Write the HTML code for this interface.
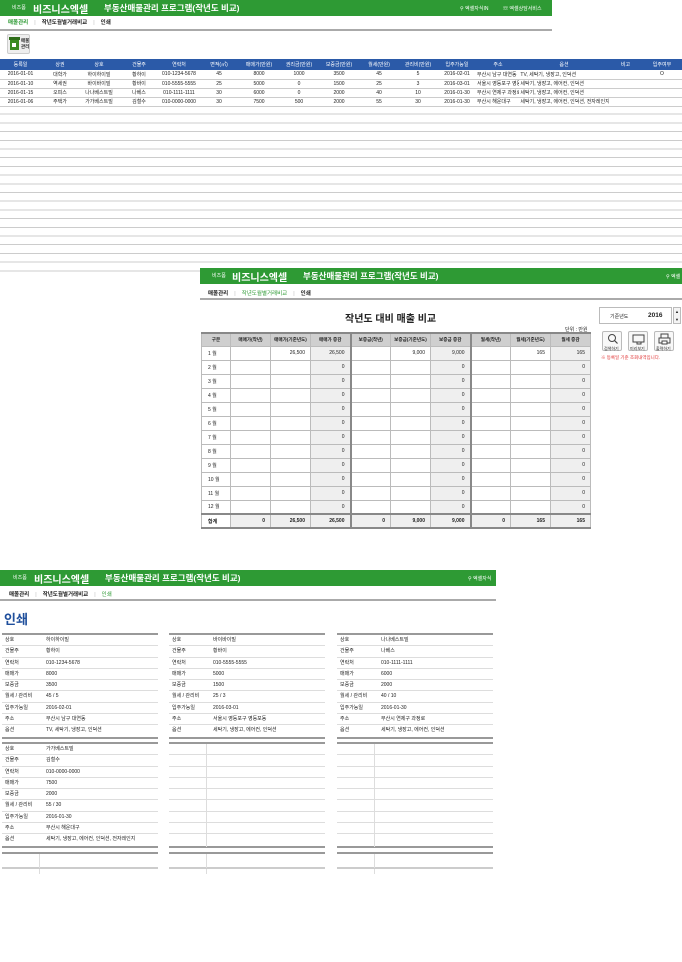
<!DOCTYPE html>
<html><head><meta charset="utf-8">
<style>
*{margin:0;padding:0;box-sizing:border-box}
body{width:682px;height:962px;background:#fff;position:relative;overflow:hidden;font-family:"Liberation Sans","Noto Sans CJK KR",sans-serif;color:#222}
.abs{position:absolute}
.gh{background:#2e9a34;color:#fff;height:16px;white-space:nowrap}
.gh .s{position:absolute;top:4px;font-size:5px}
.gh .b{position:absolute;top:1px;font-size:10px;font-weight:bold}
.gh .t{position:absolute;top:2px;font-size:8.5px;font-weight:bold}
.gh .r{position:absolute;top:5px;font-size:5px}
.nav{font-size:5.5px;font-weight:bold;white-space:nowrap}
.nav span{margin-right:6px}
.nav .sep{color:#bbb;font-weight:normal}
.gl{height:2px;background:#aaa}
table{border-collapse:collapse;table-layout:fixed}
.t1 td{font-size:5px;height:9px;text-align:center;border-bottom:1px solid #ccc;white-space:nowrap;padding:0;overflow:hidden}
.t1 tr.h td{background:#2b5aa8;color:#fff;height:11px;border:none}
.t1 td.l{text-align:left}
.t2 td{font-size:5px;border:1px solid #bbb;height:14px;text-align:right;padding-right:5px;white-space:nowrap;overflow:hidden}
.t2 td:first-child{text-align:left;padding-left:6px;padding-right:0}
.t2 tr.h td{background:#cfcfcf;text-align:center;padding:0;font-weight:bold;height:13px;border-top:2px solid #888;font-size:4.6px}
.t2 td.g{background:#efefef}
.t2 td.k{border-right:2px solid #888}
.t2 tr.f td{font-weight:bold;border-top:2px solid #888;border-bottom:2px solid #888}
.card{position:absolute;width:156px;border-top:2px solid #999;border-bottom:2px solid #999}
.card div{height:11.3px;border-bottom:1px solid #ddd;font-size:5px;position:relative;line-height:10px;white-space:nowrap}
.card div:last-child{border-bottom:none}
.card div b{font-weight:normal;position:absolute;left:3px}
.card div i{font-style:normal;position:absolute;left:44px}
.card.e div:before{content:"";position:absolute;left:37px;top:0;bottom:-1px;border-left:1px solid #ddd}
</style></head><body>

<!-- Panel 1 -->
<div class="abs gh" style="left:0;top:0;width:552px">
<span class="s" style="left:12px">비즈폼</span><span class="b" style="left:33px">비즈니스엑셀</span>
<span class="t" style="left:104px">부동산매물관리 프로그램(작년도 비교)</span>
<span class="r" style="left:460px">⚲ 엑셀자식IN</span><span class="r" style="left:503px">☏ 엑셀상담서비스</span></div>
<div class="abs nav" style="left:8px;top:18px"><span style="color:#2e9a34">매물관리</span><span class="sep">|</span><span>작년도월별거래비교</span><span class="sep">|</span><span>인쇄</span></div>
<div class="abs gl" style="left:0;top:29px;width:552px"></div>
<div class="abs" style="left:7px;top:34px;width:23px;height:20px;background:#eee;border:1px solid #ccc;border-radius:2px">
<div class="abs" style="left:2px;top:4px;width:9px;height:11px;background:#3a8a22"></div>
<div class="abs" style="left:1px;top:2px;width:11px;height:3px;background:#2d6d18"></div>
<div class="abs" style="left:4px;top:8px;width:4px;height:4px;background:#fff"></div>
<div class="abs" style="left:13px;top:3px;font-size:4.5px;font-weight:bold;line-height:6px;white-space:nowrap">매물<br>관리</div></div>
<table class="abs t1" style="left:0;top:59px;width:682px">
<colgroup><col style="width:41px"><col style="width:38px"><col style="width:40px"><col style="width:40px"><col style="width:40px"><col style="width:40px"><col style="width:40px"><col style="width:40px"><col style="width:40px"><col style="width:40px"><col style="width:38px"><col style="width:40px"><col style="width:42px"><col style="width:90px"><col style="width:33px"><col></colgroup>
<tr class="h"><td>등록일</td><td>상권</td><td>상호</td><td>건물주</td><td>연락처</td><td>면적(㎡)</td><td>매매가(만원)</td><td>권리금(만원)</td><td>보증금(만원)</td><td>월세(만원)</td><td>관리비(만원)</td><td>입주가능일</td><td>주소</td><td>옵션</td><td>비고</td><td>입주여부</td></tr>
<tr><td>2016-01-01</td><td>대학가</td><td>하이하이빌</td><td>황하이</td><td>010-1234-5678</td><td>45</td><td>8000</td><td>1000</td><td>3500</td><td>45</td><td>5</td><td>2016-02-01</td><td class="l">부산시 남구 대연동</td><td class="l">&nbsp;TV, 세탁기, 냉장고, 인덕션</td><td></td><td>O</td></tr>
<tr><td>2016-01-10</td><td>역세권</td><td>바이바이빌</td><td>황바이</td><td>010-5555-5555</td><td>25</td><td>5000</td><td>0</td><td>1500</td><td>25</td><td>3</td><td>2016-03-01</td><td class="l">서울시 영등포구 영등포동</td><td class="l">&nbsp;세탁기, 냉장고, 에어컨, 인덕션</td><td></td><td></td></tr>
<tr><td>2016-01-15</td><td>오피스</td><td>나나베스트빌</td><td>나베스</td><td>010-1111-1111</td><td>30</td><td>6000</td><td>0</td><td>2000</td><td>40</td><td>10</td><td>2016-01-30</td><td class="l">부산시 연제구 과정로</td><td class="l">&nbsp;세탁기, 냉장고, 에어컨, 인덕션</td><td></td><td></td></tr>
<tr><td>2016-01-06</td><td>주택가</td><td>가가베스트빌</td><td>김철수</td><td>010-0000-0000</td><td>30</td><td>7500</td><td>500</td><td>2000</td><td>55</td><td>30</td><td>2016-01-30</td><td class="l">부산시 해운대구</td><td class="l">&nbsp;세탁기, 냉장고, 에어컨, 인덕션, 전자레인지</td><td></td><td></td></tr>
</table>
<div class="abs" style="left:0;top:106px;width:682px;height:168px;background:repeating-linear-gradient(to bottom,transparent 0,transparent 7.7px,#ccc 7.7px,#ccc 8.7px)"></div>

<!-- Panel 2 -->
<div class="abs" style="left:200px;top:267px;width:482px;height:270px;background:#fff"></div>
<div class="abs gh" style="left:200px;top:268px;width:482px">
<span class="s" style="left:12px">비즈폼</span><span class="b" style="left:32px">비즈니스엑셀</span>
<span class="t" style="left:103px">부동산매물관리 프로그램(작년도 비교)</span>
<span class="r" style="left:466px">⚲ 엑셀</span></div>
<div class="abs nav" style="left:208px;top:289px"><span>매물관리</span><span class="sep">|</span><span style="color:#2e9a34;font-weight:normal">작년도월별거래비교</span><span class="sep">|</span><span>인쇄</span></div>
<div class="abs gl" style="left:200px;top:298px;width:482px"></div>
<div class="abs" style="left:345px;top:310px;font-size:10px;font-weight:bold">작년도 대비 매출 비교</div>
<div class="abs" style="left:565px;top:326px;font-size:5px">단위 : 만원</div>
<table class="abs t2" style="left:201px;top:332px;width:389px">
<colgroup><col style="width:29px"><col style="width:40px"><col style="width:40px"><col style="width:40px"><col style="width:40px"><col style="width:40px"><col style="width:40px"><col style="width:40px"><col style="width:40px"><col style="width:40px"></colgroup>
<tr class="h"><td>구분</td><td>매매가(작년)</td><td>매매가(기준년도)</td><td class="k">매매가 증감</td><td>보증금(작년)</td><td>보증금(기준년도)</td><td class="k">보증금 증감</td><td>월세(작년)</td><td>월세(기준년도)</td><td>월세 증감</td></tr>
<tr><td>1 월</td><td></td><td>26,500</td><td class="g k">26,500</td><td></td><td>9,000</td><td class="g k">9,000</td><td></td><td>165</td><td class="g">165</td></tr>
<tr><td>2 월</td><td></td><td></td><td class="g k">0</td><td></td><td></td><td class="g k">0</td><td></td><td></td><td class="g">0</td></tr>
<tr><td>3 월</td><td></td><td></td><td class="g k">0</td><td></td><td></td><td class="g k">0</td><td></td><td></td><td class="g">0</td></tr>
<tr><td>4 월</td><td></td><td></td><td class="g k">0</td><td></td><td></td><td class="g k">0</td><td></td><td></td><td class="g">0</td></tr>
<tr><td>5 월</td><td></td><td></td><td class="g k">0</td><td></td><td></td><td class="g k">0</td><td></td><td></td><td class="g">0</td></tr>
<tr><td>6 월</td><td></td><td></td><td class="g k">0</td><td></td><td></td><td class="g k">0</td><td></td><td></td><td class="g">0</td></tr>
<tr><td>7 월</td><td></td><td></td><td class="g k">0</td><td></td><td></td><td class="g k">0</td><td></td><td></td><td class="g">0</td></tr>
<tr><td>8 월</td><td></td><td></td><td class="g k">0</td><td></td><td></td><td class="g k">0</td><td></td><td></td><td class="g">0</td></tr>
<tr><td>9 월</td><td></td><td></td><td class="g k">0</td><td></td><td></td><td class="g k">0</td><td></td><td></td><td class="g">0</td></tr>
<tr><td>10 월</td><td></td><td></td><td class="g k">0</td><td></td><td></td><td class="g k">0</td><td></td><td></td><td class="g">0</td></tr>
<tr><td>11 월</td><td></td><td></td><td class="g k">0</td><td></td><td></td><td class="g k">0</td><td></td><td></td><td class="g">0</td></tr>
<tr><td>12 월</td><td></td><td></td><td class="g k">0</td><td></td><td></td><td class="g k">0</td><td></td><td></td><td class="g">0</td></tr>
<tr class="f"><td>합계</td><td class="g">0</td><td class="g">26,500</td><td class="g k">26,500</td><td class="g">0</td><td class="g">9,000</td><td class="g k">9,000</td><td class="g">0</td><td class="g">165</td><td class="g">165</td></tr>
</table>
<div class="abs" style="left:599px;top:307px;width:73px;height:17px;border:1px solid #bbb;font-size:5px;font-weight:bold">
<span class="abs" style="left:10px;top:5px;font-weight:normal">기준년도</span><span class="abs" style="left:48px;top:4px;font-size:6.5px">2016</span></div>
<div class="abs" style="left:673px;top:307px;width:8px;height:17px;border:1px solid #bbb;background:#f4f4f4;font-size:4px;text-align:center;line-height:8px">▲<br>▼</div>
<div class="abs" style="left:602px;top:331px;width:20px;height:20px;border:1px solid #bbb;border-radius:2px;background:#f8f8f8">
<svg width="20" height="14" class="abs" style="left:0;top:0"><circle cx="9" cy="6" r="3.5" fill="none" stroke="#444" stroke-width="1"/><path d="M11.5 8.5l3 3" stroke="#444" stroke-width="1.2"/></svg>
<span class="abs" style="left:1px;top:14px;font-size:4px;white-space:nowrap">검색하기</span></div>
<div class="abs" style="left:628px;top:331px;width:20px;height:20px;border:1px solid #bbb;border-radius:2px;background:#f8f8f8">
<svg width="20" height="14" class="abs" style="left:0;top:0"><rect x="4" y="3" width="11" height="7" fill="none" stroke="#444"/><path d="M8 10v2h4v-2" fill="none" stroke="#444"/></svg>
<span class="abs" style="left:1px;top:14px;font-size:4px;white-space:nowrap">미리보기</span></div>
<div class="abs" style="left:654px;top:331px;width:20px;height:20px;border:1px solid #bbb;border-radius:2px;background:#f8f8f8">
<svg width="20" height="14" class="abs" style="left:0;top:0"><rect x="6" y="2" width="7" height="4" fill="none" stroke="#444"/><rect x="4" y="6" width="11" height="5" fill="none" stroke="#444"/><rect x="7" y="9" width="5" height="3" fill="#fff" stroke="#444"/></svg>
<span class="abs" style="left:1px;top:14px;font-size:4px;white-space:nowrap">출력하기</span></div>
<div class="abs" style="left:601px;top:355px;font-size:4.5px;color:#e03030;white-space:nowrap">※ 등록일 기준 조회내역입니다.</div>

<!-- Panel 3 -->
<div class="abs" style="left:0;top:569px;width:496px;height:306px;background:#fff"></div>
<div class="abs gh" style="left:0;top:570px;width:496px">
<span class="s" style="left:13px">비즈폼</span><span class="b" style="left:34px">비즈니스엑셀</span>
<span class="t" style="left:105px">부동산매물관리 프로그램(작년도 비교)</span>
<span class="r" style="left:468px">⚲ 엑셀자식</span></div>
<div class="abs nav" style="left:9px;top:590px"><span>매물관리</span><span class="sep">|</span><span>작년도월별거래비교</span><span class="sep">|</span><span style="color:#2e9a34;font-weight:normal">인쇄</span></div>
<div class="abs gl" style="left:0;top:599px;width:496px"></div>
<div class="abs" style="left:4px;top:609px;font-size:13px;font-weight:bold;color:#1f4f9c">인쇄</div>

<div class="card" style="left:2px;top:633px"><div><b>상호</b><i>하이하이빌</i></div><div><b>건물주</b><i>황하이</i></div><div><b>연락처</b><i>010-1234-5678</i></div><div><b>매매가</b><i>8000</i></div><div><b>보증금</b><i>3500</i></div><div><b>월세 / 관리비</b><i>45 / 5</i></div><div><b>입주가능일</b><i>2016-02-01</i></div><div><b>주소</b><i>부산시 남구 대연동</i></div><div><b>옵션</b><i>TV, 세탁기, 냉장고, 인덕션</i></div></div>
<div class="card" style="left:169px;top:633px"><div><b>상호</b><i>바이바이빌</i></div><div><b>건물주</b><i>황바이</i></div><div><b>연락처</b><i>010-5555-5555</i></div><div><b>매매가</b><i>5000</i></div><div><b>보증금</b><i>1500</i></div><div><b>월세 / 관리비</b><i>25 / 3</i></div><div><b>입주가능일</b><i>2016-03-01</i></div><div><b>주소</b><i>서울시 영등포구 영등포동</i></div><div><b>옵션</b><i>세탁기, 냉장고, 에어컨, 인덕션</i></div></div>
<div class="card" style="left:337px;top:633px"><div><b>상호</b><i>나나베스트빌</i></div><div><b>건물주</b><i>나베스</i></div><div><b>연락처</b><i>010-1111-1111</i></div><div><b>매매가</b><i>6000</i></div><div><b>보증금</b><i>2000</i></div><div><b>월세 / 관리비</b><i>40 / 10</i></div><div><b>입주가능일</b><i>2016-01-30</i></div><div><b>주소</b><i>부산시 연제구 과정로</i></div><div><b>옵션</b><i>세탁기, 냉장고, 에어컨, 인덕션</i></div></div>

<div class="card" style="left:2px;top:742px"><div><b>상호</b><i>가가베스트빌</i></div><div><b>건물주</b><i>김철수</i></div><div><b>연락처</b><i>010-0000-0000</i></div><div><b>매매가</b><i>7500</i></div><div><b>보증금</b><i>2000</i></div><div><b>월세 / 관리비</b><i>55 / 30</i></div><div><b>입주가능일</b><i>2016-01-30</i></div><div><b>주소</b><i>부산시 해운대구</i></div><div><b>옵션</b><i>세탁기, 냉장고, 에어컨, 인덕션, 전자레인지</i></div></div>
<div class="card e" style="left:169px;top:742px"><div></div><div></div><div></div><div></div><div></div><div></div><div></div><div></div><div></div></div>
<div class="card e" style="left:337px;top:742px"><div></div><div></div><div></div><div></div><div></div><div></div><div></div><div></div><div></div></div>

<div class="card e" style="left:2px;top:852px;border-bottom:none"><div style="height:15px;border-bottom:2px solid #ccc"></div><div style="height:4px"></div></div>
<div class="card e" style="left:169px;top:852px;border-bottom:none"><div style="height:15px;border-bottom:2px solid #ccc"></div><div style="height:4px"></div></div>
<div class="card e" style="left:337px;top:852px;border-bottom:none"><div style="height:15px;border-bottom:2px solid #ccc"></div><div style="height:4px"></div></div>

</body></html>
